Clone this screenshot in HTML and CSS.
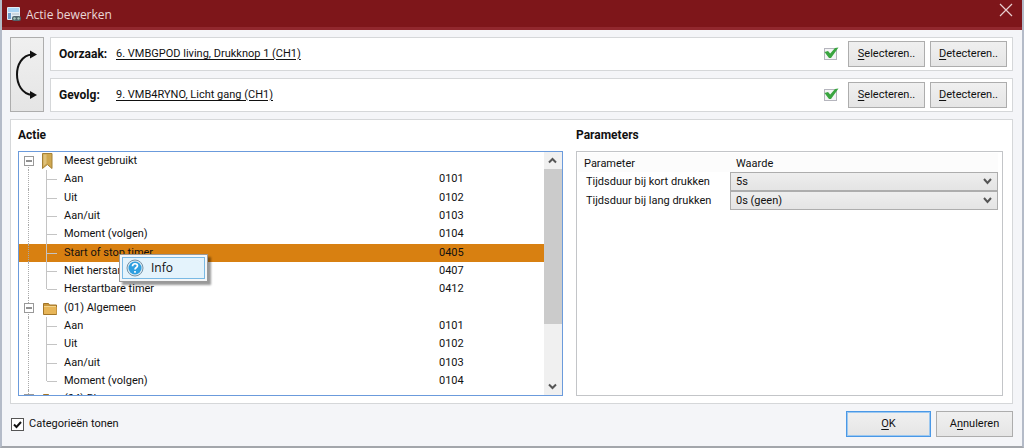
FILE: index.html
```html
<!DOCTYPE html>
<html lang="nl">
<head>
<meta charset="utf-8">
<title>Actie bewerken</title>
<link rel="stylesheet" href="styles.css">
</head>
<body>
<div class="window">
  <header class="titlebar">
    <svg class="app-icon" viewBox="0 0 14 14" aria-hidden="true"><rect width="13" height="13" rx="1" fill="#e3edf5"/><rect x="1" y="1" width="11" height="4" fill="#a9d3f3"/><rect x="1" y="6" width="3" height="6" fill="#6e9ccb"/><path d="M5 7h7" stroke="#b5c0c8"/><rect x="5" y="9" width="9" height="5" rx="2" fill="#51656d"/><circle cx="7.500" cy="11.500" r="1.200" fill="#a7c5b9"/><circle cx="11.500" cy="11.500" r="1.200" fill="#a7c5b9"/></svg>
    <h1 class="title">Actie bewerken</h1>
    <button class="close" type="button" aria-label="Sluiten"><svg viewBox="0 0 14 14"><path d="M1 1l12 12M13 1L1 13" stroke="#e8cfd0" stroke-width="1.200"/></svg></button>
  </header>
  <main class="content">
    <section class="links">
      <button class="button swap" type="button" aria-label="Omwisselen"><svg viewBox="0 0 32 72"><path d="M21 15.500C1 17 1 54 21 56" fill="none" stroke="#111" stroke-width="2"/><path d="M19 11.500L26 15.500l-7 4zM19 52L26 56l-7 4z" fill="#111"/></svg></button>
      <div class="link-rows">
        <div class="link-row">
          <b class="link-label">Oorzaak:</b><a class="link" href="#">6. VMBGPOD living, Drukknop 1 (CH1)</a>
          <svg class="ok-mark" viewBox="0 0 16 16" aria-hidden="true"><rect x="1.500" y="2.500" width="12" height="11" fill="#f4f4f6" stroke="#b5b5bd"/><path d="M1.500 6L5 5l2.200 2.500L12 2l3.500-.5L8 12H6z" fill="#3aa540"/></svg>
          <button class="button" type="button"><span><u>S</u>electeren..</span></button>
          <button class="button" type="button"><span><u>D</u>etecteren..</span></button>
        </div>
        <div class="link-row">
          <b class="link-label">Gevolg:</b><a class="link" href="#">9. VMB4RYNO, Licht gang (CH1)</a>
          <svg class="ok-mark" viewBox="0 0 16 16" aria-hidden="true"><rect x="1.500" y="2.500" width="12" height="11" fill="#f4f4f6" stroke="#b5b5bd"/><path d="M1.500 6L5 5l2.200 2.500L12 2l3.500-.5L8 12H6z" fill="#3aa540"/></svg>
          <button class="button" type="button"><span><u>S</u>electeren..</span></button>
          <button class="button" type="button"><span><u>D</u>etecteren..</span></button>
        </div>
      </div>
    </section>
    <section class="panel">
      <div class="column">
        <h2 class="heading">Actie</h2>
        <div class="tree-box">
          <div class="tree" role="tree" aria-label="Actie">
            <div class="rows">
              <div class="row group first" role="treeitem"><svg class="toggle" viewBox="0 0 10 10"><rect x=".5" y=".5" width="9" height="9" fill="#fff" stroke="#999"/><path d="M2 5h6" stroke="#222"/></svg><svg class="group-icon" viewBox="0 0 16 16"><path d="M.5 .5h9.500v15l-4.700-4-4.800 4z" fill="#cfa850" stroke="#a48137"/><path d="M1.500 1.500h3v9l-3 2.500z" fill="#dfc27c"/></svg><span class="name">Meest gebruikt</span></div>
              <div class="row item" role="treeitem"><span class="name">Aan</span><span class="code">0101</span></div>
              <div class="row item" role="treeitem"><span class="name">Uit</span><span class="code">0102</span></div>
              <div class="row item" role="treeitem"><span class="name">Aan/uit</span><span class="code">0103</span></div>
              <div class="row item" role="treeitem"><span class="name">Moment (volgen)</span><span class="code">0104</span></div>
              <div class="row item selected" role="treeitem" aria-selected="true"><span class="name">Start of stop timer</span><span class="code">0405</span>
                <div class="menu" role="menu"><button class="menu-item" type="button" role="menuitem"><svg viewBox="0 0 18 18" aria-hidden="true"><circle cx="9" cy="9" r="8" fill="#dceaf3" stroke="#7893a6"/><circle cx="9" cy="9" r="6.500" fill="#2f9fe0"/><path d="M6.500 7.200c0-3.200 5-3.200 5-.4 0 1.700-2.500 1.700-2.500 3.700M9 12v1.700" fill="none" stroke="#fff" stroke-width="1.700"/></svg><span>Info</span></button></div>
              </div>
              <div class="row item" role="treeitem"><span class="name">Niet herstartbare timer</span><span class="code">0407</span></div>
              <div class="row item last" role="treeitem"><span class="name">Herstartbare timer</span><span class="code">0412</span></div>
              <div class="row group" role="treeitem"><svg class="toggle" viewBox="0 0 10 10"><rect x=".5" y=".5" width="9" height="9" fill="#fff" stroke="#999"/><path d="M2 5h6" stroke="#222"/></svg><svg class="group-icon" viewBox="0 0 16 16"><path d="M1.500 14.500V3.500h5l1 1.500h7v9.500z" fill="#c9973c" stroke="#a27528"/><path d="M2 7h12.500v7H2z" fill="#e7b558"/><path d="M2 6.500h12" stroke="#f3d48c"/></svg><span class="name">(01) Algemeen</span></div>
              <div class="row item" role="treeitem"><span class="name">Aan</span><span class="code">0101</span></div>
              <div class="row item" role="treeitem"><span class="name">Uit</span><span class="code">0102</span></div>
              <div class="row item" role="treeitem"><span class="name">Aan/uit</span><span class="code">0103</span></div>
              <div class="row item last" role="treeitem"><span class="name">Moment (volgen)</span><span class="code">0104</span></div>
            </div>
            <div class="cut">
              <div class="row group" role="treeitem"><svg class="toggle" viewBox="0 0 10 10"><rect x=".5" y=".5" width="9" height="9" fill="#fff" stroke="#999"/></svg><svg class="group-icon" viewBox="0 0 16 16"><path d="M1.500 14.500V3.500h5l1 1.500h7v9.500z" fill="#c9973c" stroke="#a27528"/></svg><span class="name">(04) Bl</span></div>
            </div>
          </div>
          <div class="scrollbar" aria-hidden="true">
            <svg class="arrow" viewBox="0 0 17 17"><path d="M5 10.500L8.500 7l3.500 3.500" fill="none" stroke="#555" stroke-width="2"/></svg>
            <div class="track"><div class="thumb"></div></div>
            <svg class="arrow" viewBox="0 0 17 17"><path d="M5 6.500L8.500 10 12 6.500" fill="none" stroke="#555" stroke-width="2"/></svg>
          </div>
        </div>
      </div>
      <div class="column params">
        <h2 class="heading">Parameters</h2>
        <div class="param-box">
          <table class="table">
            <thead><tr><th class="param-name">Parameter</th><th>Waarde</th></tr></thead>
            <tbody>
              <tr><td><label for="short">Tijdsduur bij kort drukken</label></td><td class="value"><select class="select" id="short"><option>5s</option></select></td></tr>
              <tr><td><label for="long">Tijdsduur bij lang drukken</label></td><td class="value"><select class="select" id="long"><option>0s (geen)</option></select></td></tr>
            </tbody>
          </table>
        </div>
      </div>
    </section>
    <footer class="footer">
      <label class="check"><input class="box" type="checkbox" checked>Categorieën tonen</label>
      <button class="button default" type="button"><span><u>O</u>K</span></button>
      <button class="button" type="button"><span>A<u>n</u>nuleren</span></button>
    </footer>
  </main>
</div>
</body>
</html>
```
FILE: styles.css
```css
* { box-sizing: border-box; }
body {
  margin: 0;
  background: #c3c8d0;
  color: #111;
  font: 11px/16px Roboto, "Liberation Sans", sans-serif;
}
button, select { font: inherit; color: inherit; }
svg { display: block; flex: none; }
u { text-underline-offset: 2px; }
.window {
  display: flex;
  flex-direction: column;
  min-height: 100vh;
  border: solid #b4bbc8;
  border-width: 0 2px 2px;
  border-bottom-color: #a3a6ab;
  background: #f4f5f8;
}
.titlebar {
  display: flex;
  align-items: center;
  height: 30px;
  padding: 0 9px 0 5px;
  border-bottom: 3px solid #91282e;
  background: #7e161a;
}
.app-icon { width: 14px; height: 14px; }
.title {
  flex: 1;
  margin: 2px 0 0 5px;
  color: #ead6d7;
  font: 12px/16px "Open Sans", "Noto Sans", sans-serif;
}
.close { padding: 0; border: 0; background: none; margin-bottom: 7px; }
.close svg { width: 14px; height: 14px; }
.content {
  flex: 1;
  display: flex;
  flex-direction: column;
  gap: 7px;
  padding: 7px 9px 9px 8px;
}
.links { display: flex; gap: 6px; }
.link-rows { flex: 1; display: flex; flex-direction: column; gap: 7px; }
.link-row {
  display: flex;
  align-items: center;
  gap: 5px;
  height: 34px;
  padding: 0 5px 0 8px;
  border: 1px solid #d5d7d9;
  background: #fff;
}
.link-label { width: 52px; font-size: 12px; }
.link { flex: 1; color: inherit; text-underline-offset: 2px; }
.ok-mark { width: 16px; height: 16px; margin-right: 4px; }
.button {
  width: 77px;
  height: 26px;
  padding: 0;
  border: 1px solid #adadad;
  border-radius: 0;
  background: linear-gradient(#f0f0f0, #e5e5e5);
}
.swap { width: 34px; height: auto; }
.swap svg { width: 32px; height: 72px; }
.panel {
  flex: 1;
  display: flex;
  gap: 13px;
  padding: 7px 9px 7px 7px;
  border: 1px solid #d5d7d9;
  background: #fff;
}
.column { flex: 545; display: flex; flex-direction: column; min-width: 0; }
.params { flex: 427; }
.heading { margin: 0 0 8px; font-size: 12px; line-height: 16px; }
.tree-box { flex: 1; display: flex; border: 1px solid #6b9bdc; }
.tree { flex: 1; display: flex; flex-direction: column; min-width: 0; }
.rows { flex: 1; display: grid; grid-template-rows: repeat(13, 1fr); }
.cut { height: 5px; overflow: hidden; }
.row {
  position: relative;
  display: flex;
  align-items: center;
  height: 100%;
  padding-left: 45px;
}
.cut .row { height: 18px; }
.row::before {
  content: "";
  position: absolute;
  left: 9px;
  top: 0;
  bottom: 0;
  border-left: 1px dotted #aaa;
}
.first::before { top: 50%; }
.item::after {
  content: "";
  position: absolute;
  left: 28px;
  top: 50%;
  width: 10px;
  border-top: 1px solid #c4c4c4;
}
.item {
  background: linear-gradient(#c4c4c4, #c4c4c4) 27px 0 / 1px 100% no-repeat;
}
.last { background-size: 1px 50%; }
.group { padding-left: 5px; }
.toggle { position: relative; width: 10px; height: 10px; margin-right: 8px; }
.group-icon { width: 16px; height: 16px; margin-right: 6px; }
.name { flex: 1; }
.code { width: 105px; }
.selected { background-color: #d88011; }
.menu {
  position: absolute;
  z-index: 1;
  left: 100px;
  top: 10px;
  padding: 2px;
  border: 1px solid #999;
  background: #f5f6f7;
  box-shadow: 3px 3px 2px #0006;
}
.menu-item {
  display: flex;
  align-items: center;
  gap: 7px;
  width: 83px;
  height: 22px;
  padding: 0 3px;
  border: 1px solid #79b9e4;
  background: #e4f3fc;
  font: 12px/16px "Open Sans", "Noto Sans", sans-serif;
}
.menu-item svg { width: 18px; height: 18px; }
.scrollbar { width: 18px; display: flex; flex-direction: column; background: #f0f0f0; }
.arrow { width: 17px; height: 17px; }
.track { flex: 1; }
.thumb { height: 74%; background: #cbcbcb; }
.param-box { flex: 1; padding: 1px 4px 0 1px; border: 1px solid #c3c5c8; }
.table { width: 100%; border-collapse: collapse; table-layout: fixed; }
.table th { height: 19px; padding: 3px 6px 0; font-weight: 400; text-align: left; background: #fcfcfc; }
.table .param-name { width: 152px; }
.table td { height: 18px; padding: 0 8px; }
.table .value { padding: 0; }
.select {
  display: block;
  width: 100%;
  height: 19px;
  padding: 0 5px;
  border: 1px solid #adadad;
  border-radius: 0;
  appearance: none;
  background: url("data:image/svg+xml,%3Csvg xmlns='http://www.w3.org/2000/svg' viewBox='0 0 9 7'%3E%3Cpath d='M1 1l3.500 4L8 1' fill='none' stroke='%23555' stroke-width='2'/%3E%3C/svg%3E") right 5px center / 9px 7px no-repeat, linear-gradient(#eee, #e4e4e4);
}
.footer { display: flex; align-items: center; gap: 5px; }
.check { flex: 1; display: flex; align-items: center; gap: 5px; }
.box {
  appearance: none;
  width: 13px;
  height: 13px;
  margin: 0 0 0 1px;
  border: 1px solid #555;
  background: #fff url("data:image/svg+xml,%3Csvg xmlns='http://www.w3.org/2000/svg' viewBox='0 0 11 11'%3E%3Cpath d='M2 5.500L4.500 8 9 3' fill='none' stroke='%23111' stroke-width='2'/%3E%3C/svg%3E") center / 11px no-repeat;
}
.default { width: 85px; border: 1px solid #4a98e6; outline: 1px solid #9cc8f0; outline-offset: -2px; }
```
